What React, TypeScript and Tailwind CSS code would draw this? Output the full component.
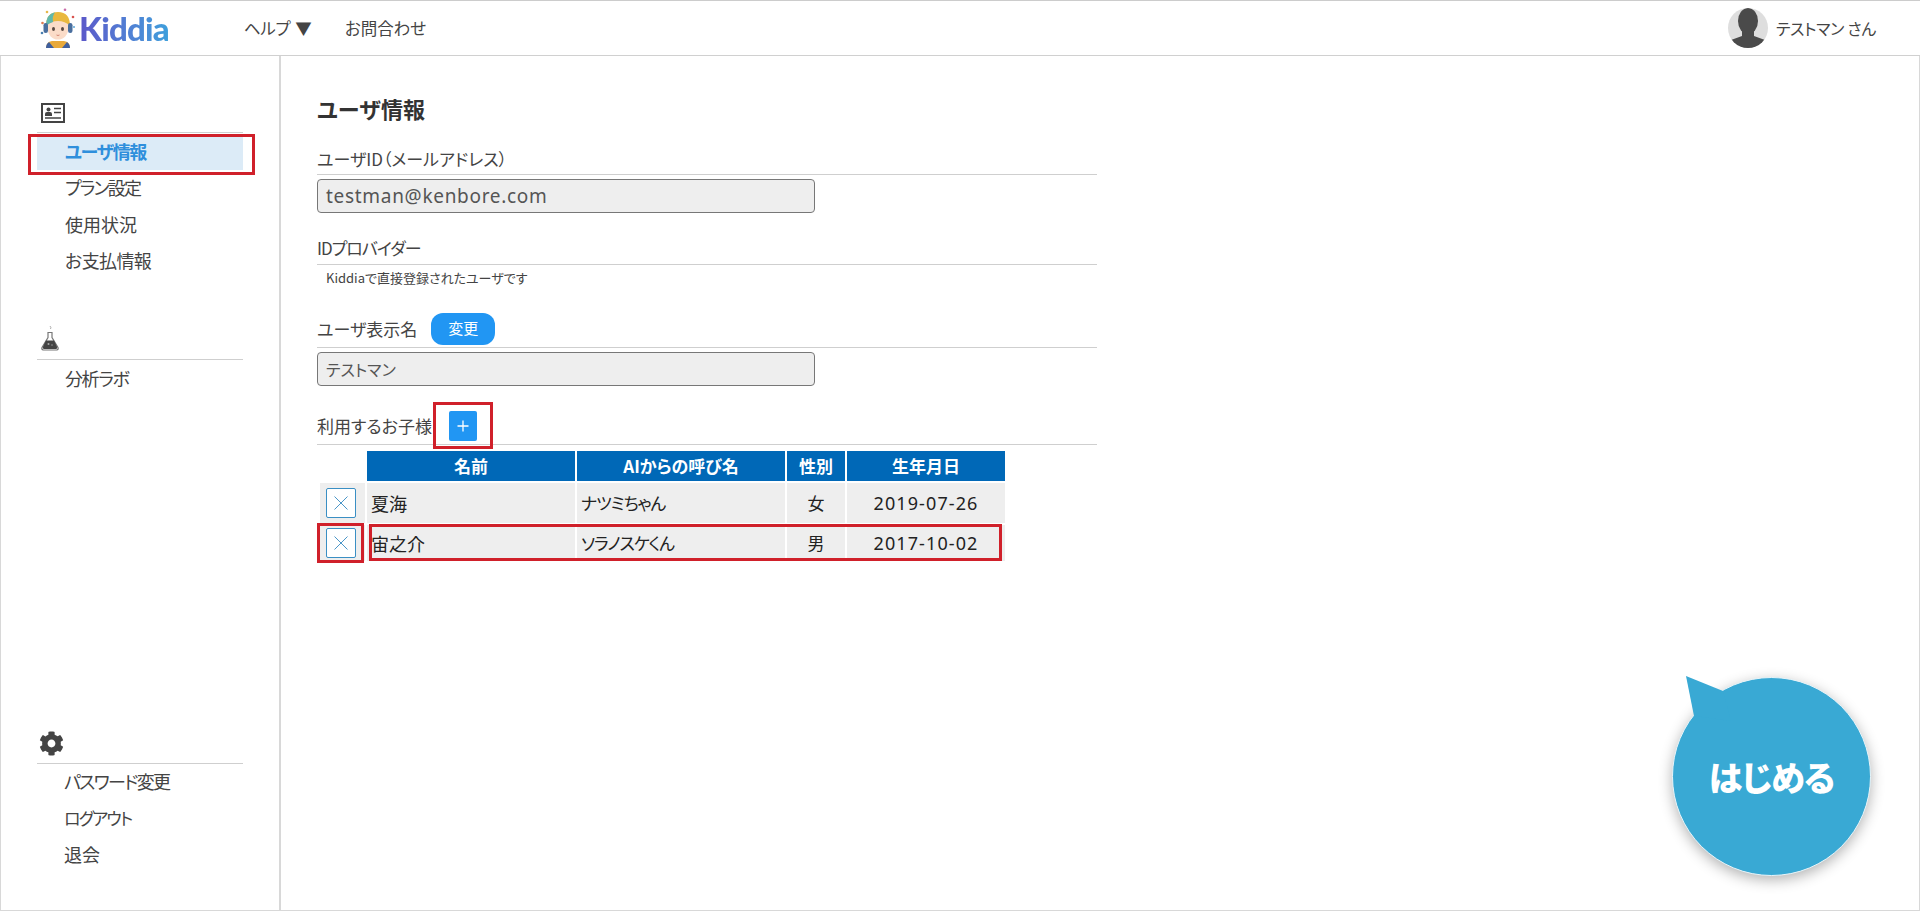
import { FaCog } from "react-icons/fa";

const JP = "font-['Noto_Sans_CJK_JP','Noto_Sans',sans-serif] [font-feature-settings:'palt']";

function CardIcon() {
  return (
    <svg width="24" height="20" viewBox="0 0 24 20" className="block">
      <rect x="1" y="1" width="22" height="18" fill="none" stroke="#444" strokeWidth="2" />
      <circle cx="7.5" cy="6.5" r="2" fill="#444" />
      <path d="M4 13v-2q0-2 2-2h3q2 0 2 2v2z" fill="#444" />
      <path d="M13 5.5h7M13 9.5h7M4 15h16" stroke="#444" strokeWidth="1.6" />
    </svg>
  );
}

function FlaskIcon() {
  return (
    <svg width="18" height="26" viewBox="0 0 18 26" className="block">
      <path d="M7 7.5h4v5l6 10q.7 2-1.2 2.5H2.2Q.3 24.500 1 22.500l6-10z" fill="#fff" stroke="#777" strokeWidth="1.2" />
      <path d="M5 15.500h8l3.200 6.500q.3 2-1.200 2H3q-1.500 0-1.200-2z" fill="#444" />
      <circle cx="7.500" cy="19" r="1" fill="#aaa" />
      <circle cx="11" cy="20" r=".7" fill="#aaa" />
      <path d="M9 1q1.500 1.500 .5 3" stroke="#999" fill="none" strokeWidth=".8" />
    </svg>
  );
}

function Avatar() {
  return (
    <svg width="40" height="40" viewBox="0 0 40 40" className="block">
      <clipPath id="av"><circle cx="20" cy="20" r="20" /></clipPath>
      <circle cx="20" cy="20" r="20" fill="#dedede" />
      <g clipPath="url(#av)" fill="#4a4a4a">
        <ellipse cx="20" cy="13" rx="10" ry="13" />
        <path d="M14 20h12v8l11 4q2 2 2 8H1q0-6 2-8l11-4z" />
      </g>
    </svg>
  );
}

function Logo() {
  return (
    <div className="flex items-center">
      <svg width="36" height="40" viewBox="0 0 36 40" className="block">
        <circle cx="2.500" cy="15" r="1.300" fill="#e07b4f" />
        <circle cx="33" cy="9" r="1.300" fill="#d9534f" />
        <circle cx="25" cy="1.800" r="1.300" fill="#c96aa8" />
        <circle cx="34" cy="19" r="1" fill="#5ba7d9" />
        <circle cx="2" cy="25" r="1.300" fill="#4a7fb0" />
        <circle cx="7" cy="4" r="1.300" fill="#e6b84a" />
        <path d="M6 40q0-6 6-7h12q6 1 6 7z" fill="#e8a93a" />
        <path d="M6 40q0-4 3-6l5 6zM30 40q0-4-3-6l-5 6z" fill="#3f5f9e" />
        <ellipse cx="18" cy="20" rx="10.500" ry="11.500" fill="#fbdcc8" />
        <path d="M6 18Q6 4 18 4t12 14q-5-5-12-5T6 18z" fill="#e9b83f" />
        <path d="M6 18Q6 6 15 4.200q-3 4-2 9.800-4 1-7 4z" fill="#5fb8ad" />
        <rect x="3.500" y="15" width="4.500" height="10" rx="2.200" fill="#4a6f9e" />
        <rect x="28" y="15" width="4.500" height="10" rx="2.200" fill="#4a6f9e" />
        <ellipse cx="13.500" cy="21" rx="1.500" ry="2" fill="#5a4a42" />
        <ellipse cx="22.500" cy="21" rx="1.500" ry="2" fill="#5a4a42" />
        <path d="M16.500 27q1.500 1 3 0" stroke="#c9705f" fill="none" strokeWidth=".8" />
      </svg>
      <span className="ml-[3px] font-['Lato',sans-serif] text-[33px] leading-none font-black tracking-[-0.800px] bg-gradient-to-r from-[#5b57c9] to-[#3d9fdc] bg-clip-text text-transparent">Kiddia</span>
    </div>
  );
}

type Item = { t: string; c: string };

function NavGroup({ icon, items, active, iconClass, itemPad = "pl-[28px]" }: { icon: React.ReactNode; items: Item[]; active?: string; iconClass: string; itemPad?: string }) {
  return (
    <div>
      <div className={`flex items-end box-content ${iconClass}`}>{icon}</div>
      <div className="border-t border-[#cfcfcf] pt-[3px]">
        {items.map(({ t, c }) => (
          <div
            key={t}
            className={
              t === active
                ? `relative h-[34px] mb-[2.500px] pb-[4px] ${itemPad} flex items-center font-bold text-[#2f8fdc] bg-[#dcebf7] ${c}`
                : `h-[34px] mb-[2.500px] pb-[4px] ${itemPad} flex items-center text-[#444] ${c}`
            }
          >
            {t}
            {t === active && (
              <div className="absolute left-[-9px] top-[-2px] w-[227px] h-[41px] border-[3px] border-[#d0202a]" />
            )}
          </div>
        ))}
      </div>
    </div>
  );
}

function Section({ label, extra, className, labelClass = "" }: { label: string; extra?: React.ReactNode; className: string; labelClass?: string }) {
  return (
    <div className={`w-[780px] border-b border-[#cfcfcf] flex items-center text-[17px] text-[#444] ${className}`}>
      <span className={labelClass}>{label}</span>
      {extra}
    </div>
  );
}

function Field({ value, className }: { value: string; className: string }) {
  return (
    <div className={`mt-[4px] w-[498px] h-[34px] flex items-center pl-[8px] bg-[#eeeeee] border border-[#777] rounded-[4px] text-[#555] ${className}`}>
      {value}
    </div>
  );
}

function XButton() {
  return (
    <button className="w-[30px] h-[30px] flex items-center justify-center bg-white border border-[#3a8fc4] rounded-[2px]">
      <svg width="16" height="16" viewBox="0 0 16 16">
        <path d="M1.500 1.500l13 13M14.500 1.500l-13 13" stroke="#4a96c8" strokeWidth="1" fill="none" />
      </svg>
    </button>
  );
}

const rows = [
  { name: "夏海", ai: "ナツミちゃん", sex: "女", date: "2019-07-26", h: "h-[40px]" },
  { name: "宙之介", ai: "ソラノスケくん", sex: "男", date: "2017-10-02", h: "h-[36px]" },
];

export default function App() {
  return (
    <div className={`relative w-[1920px] h-[912px] overflow-hidden bg-white ${JP}`}>
      <header className="h-[56px] border-t border-b border-[#d0d0d0] flex items-center pl-[40px] pr-[44px] border-t-[#cccccc]">
        <Logo />
        <nav className="flex items-center ml-[75px] text-[16.500px] text-[#444] gap-[33px]">
          <span className="flex items-center gap-[5px]"><span className="tracking-[-0.300px]">ヘルプ</span><span>▼</span></span>
          <span>お問合わせ</span>
        </nav>
        <div className="ml-auto flex items-center gap-[8px] text-[16px] text-[#444]">
          <Avatar />
          <span className="tracking-[-0.300px]">テストマン さん</span>
        </div>
      </header>
      <div className="h-[855px] flex border-l border-r border-b border-[#d8d8d8]">
        <aside className="w-[280px] shrink-0 border-r-2 border-[#d8d8d8] pl-[36px] pr-[36px] pt-[36px] pb-[34px] flex flex-col">
          <NavGroup
            icon={<CardIcon />}
            iconClass="h-[31px] pl-[4px] pb-[9px]"
            items={[
              { t: "ユーザ情報", c: "text-[18px] tracking-[-1.500px]" },
              { t: "プラン設定", c: "text-[18px] tracking-[-1.800px]" },
              { t: "使用状況", c: "text-[18px]" },
              { t: "お支払情報", c: "text-[18px] tracking-[-0.600px]" },
            ]}
            active="ユーザ情報"
          />
          <div className="mt-[37px]">
            <NavGroup icon={<FlaskIcon />} iconClass="h-[32px] pl-[4px] pb-[8px]" items={[{ t: "分析ラボ", c: "text-[18px] tracking-[-1.400px]" }]} />
          </div>
          <div className="mt-auto">
            <NavGroup
              icon={<FaCog size={25} color="#444" />}
              iconClass="h-[32px] pl-[2px] pb-[7px]"
              itemPad="pl-[27px]"
              items={[
                { t: "パスワード変更", c: "text-[18px] tracking-[-1.700px]" },
                { t: "ログアウト", c: "text-[17px] tracking-[-1.800px]" },
                { t: "退会", c: "text-[18px]" },
              ]}
            />
          </div>
        </aside>
        <main className="flex-1 pl-[36px] pt-[37px]">
          <h1 className="text-[22px] leading-[30px] font-bold text-[#333]">ユーザ情報</h1>
          <div className="mt-[18px]">
            <Section label="ユーザID（メールアドレス）" className="h-[34px] pt-[3px]" />
            <Field value="testman@kenbore.com" className="text-[19px] tracking-[0.700px] font-['Noto_Sans',sans-serif]" />
          </div>
          <div className="mt-[18px]">
            <Section label="IDプロバイダー" className="h-[34px]" labelClass="tracking-[-1px]" />
            <div className="pl-[9px] pt-[3px] text-[13px] leading-[20px] text-[#444]">Kiddiaで直接登録されたユーザです</div>
          </div>
          <div className="mt-[22px]">
            <Section
              label="ユーザ表示名"
              className="h-[38px]"
              extra={<button className="ml-[14px] w-[64px] h-[32px] bg-[#2196f3] text-white text-[15px] rounded-[12px]">変更</button>}
            />
            <Field value="テストマン" className="text-[16px]" />
          </div>
          <div className="mt-[21px]">
            <Section
              label="利用するお子様"
              className="h-[38px]"
              extra={
                <div className="relative ml-[17px]">
                  <button className="w-[28px] h-[30px] bg-[#2196f3] text-white rounded-[2px] flex items-center justify-center">
                    <svg width="12" height="12" viewBox="0 0 12 12"><path d="M6 0.500v11M0.500 6h11" stroke="#fff" strokeWidth="1.300" /></svg>
                  </button>
                  <div className="absolute left-[-16px] top-[-9px] w-[60px] h-[47px] border-[3px] border-[#d0202a]" />
                </div>
              }
            />
            <table className="mt-[4px] ml-[1px] border-separate border-spacing-[2px] text-[18px] text-[#222] table-fixed">
              <colgroup>
                <col className="w-[45px]" />
                <col className="w-[208px]" />
                <col className="w-[208px]" />
                <col className="w-[58px]" />
                <col className="w-[158px]" />
              </colgroup>
              <thead>
                <tr className="h-[30px]">
                  <th />
                  {["名前", "AIからの呼び名", "性別", "生年月日"].map((t) => (
                    <th key={t} className="bg-[#0068b7] text-white text-[17px] font-bold p-0">{t}</th>
                  ))}
                </tr>
              </thead>
              <tbody>
                {rows.map((r, i) => (
                  <tr key={r.name} className={r.h}>
                    <td className="relative bg-[#eeeeee] p-0">
                      <div className="flex pl-[6px] pb-[1px]"><XButton /></div>
                      {i === 1 && <div className="absolute left-[-3px] top-[-2px] w-[47px] h-[40px] border-[3px] border-[#d0202a]" />}
                    </td>
                    <td className="relative bg-[#eeeeee] pl-[4px] p-0">
                      {r.name}
                      {i === 1 && <div className="absolute left-[2px] top-[-1px] w-[633px] h-[37px] border-[3px] border-[#d0202a]" />}
                    </td>
                    <td className="bg-[#eeeeee] pl-[4px] p-0 text-[17px] tracking-[-1.100px]">{r.ai}</td>
                    <td className="bg-[#eeeeee] text-center p-0 text-[17px]">{r.sex}</td>
                    <td className="bg-[#eeeeee] text-center p-0 tracking-[1.100px] font-['Noto_Sans',sans-serif]">{r.date}</td>
                  </tr>
                ))}
              </tbody>
            </table>
          </div>
        </main>
      </div>
      <div className="absolute left-[1672px] top-[676px] w-[199px] h-[200px]">
        <div className="absolute left-0 top-[1px] w-[199px] h-[199px] rounded-full bg-[#39a9d4] border border-[#e8f5fa] shadow-[0_4px_14px_rgba(0,0,0,0.3)] flex items-center justify-center text-white font-black text-[34px] tracking-[-1px]">
          はじめる
        </div>
        <svg width="50" height="50" viewBox="0 0 50 50" className="absolute left-[14px] top-0">
          <polygon points="0,0 37,15 45,45 8,40" fill="#39a9d4" />
        </svg>
      </div>
    </div>
  );
}
